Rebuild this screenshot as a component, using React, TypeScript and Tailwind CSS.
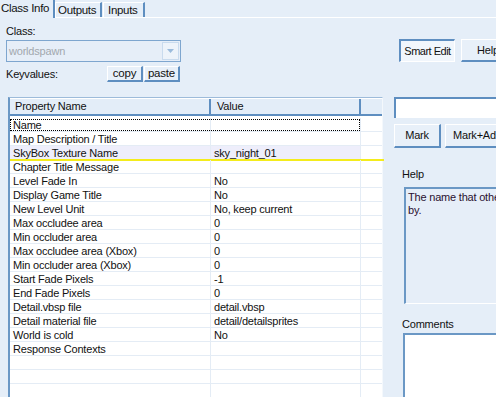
import React from "react";

const rows: [string, string][] = [
  ["Name", ""],
  ["Map Description / Title", ""],
  ["SkyBox Texture Name", "sky_night_01"],
  ["Chapter Title Message", ""],
  ["Level Fade In", "No"],
  ["Display Game Title", "No"],
  ["New Level Unit", "No, keep current"],
  ["Max occludee area", "0"],
  ["Min occluder area", "0"],
  ["Max occludee area (Xbox)", "0"],
  ["Min occluder area (Xbox)", "0"],
  ["Start Fade Pixels", "-1"],
  ["End Fade Pixels", "0"],
  ["Detail.vbsp file", "detail.vbsp"],
  ["Detail material file", "detail/detailsprites"],
  ["World is cold", "No"],
  ["Response Contexts", ""],
  ["", ""],
  ["", ""],
  ["", ""],
];

function Btn({ children, className = "" }: { children: React.ReactNode; className?: string }) {
  return (
    <div
      className={
        "flex items-center justify-center shrink-0 bg-[#e8f0f9] border-t border-l border-t-white border-l-white border-b-2 border-r-2 border-b-[#5e8ec0] border-r-[#5e8ec0] " +
        className
      }
    >
      {children}
    </div>
  );
}

export default function App() {
  return (
    <div className="w-[496px] h-[397px] overflow-hidden bg-[#e5eef8] text-[11px] tracking-[-0.2px] text-[#111] font-['Liberation_Sans',Arial,sans-serif] flex flex-col">
      {/* Tabs */}
      <div className="flex h-[18px] shrink-0">
        <div className="w-[55px] h-[18px] border-r-2 border-[#5e8ec0] pl-[1px] leading-[16px] tracking-[-0.3px] text-[11.5px] shrink-0">
          Class Info
        </div>
        <div className="flex-1 flex items-end border-b border-white">
          <div className="h-[15px] w-[47px] border-l border-t border-white border-r-2 border-r-[#5e8ec0] pl-[2px] leading-[14px] text-[11.5px] tracking-[-0.3px]">
            Outputs
          </div>
          <div className="h-[15px] w-[42px] ml-[1px] border-l border-t border-white border-r-2 border-r-[#5e8ec0] pl-[4px] leading-[14px] text-[11.5px] tracking-[-0.3px]">
            Inputs
          </div>
        </div>
      </div>

      {/* Top section */}
      <div className="flex h-[79px] shrink-0">
        <div className="w-[181px] shrink-0 pl-[6px] pt-[6px] flex flex-col">
          <div className="h-[14px] leading-[14px]">Class:</div>
          <div className="mt-[2px] h-[22px] border border-[#7ea6cf] bg-[#e6eef8] flex items-center justify-between pl-[2px] pr-[1px]">
            <span className="text-[#a2a8ae]">worldspawn</span>
            <div className="w-[17px] h-[18px] bg-[#edf3fa] border border-[#c9dbee] flex items-center justify-center">
              <svg width="7" height="4" viewBox="0 0 7 4">
                <path d="M0 0 H7 L3.5 4 Z" fill="#9bbbdc" />
              </svg>
            </div>
          </div>
          <div className="mt-[4px] flex items-center h-[16px]">
            <div className="w-[101px] shrink-0">Keyvalues:</div>
            <Btn className="w-[36px] h-[16px] text-[11.5px]">copy</Btn>
            <Btn className="w-[36px] h-[16px] ml-[1px] text-[11.5px]">paste</Btn>
          </div>
        </div>
        <div className="flex pt-[21px] ml-[218px] shrink-0">
          <div className="w-[56px] h-[23px] shrink-0 border-t-2 border-l-2 border-[#5e8ec0] border-b border-r border-b-white border-r-white bg-[#f1f6fc] flex items-center justify-center tracking-[-0.5px]">
            Smart Edit
          </div>
          <Btn className="w-[60px] h-[23px] ml-[6px] justify-start pl-[15px]">Help</Btn>
        </div>
      </div>

      {/* Bottom section */}
      <div className="flex flex-1 min-h-0">
        {/* List */}
        <div className="ml-[8px] w-[375px] shrink-0 h-[320px] border-l-2 border-t border-r border-l-[#6b98c5] border-t-[#9dbbda] border-r-[#f4f8fc] bg-white flex flex-col">
          <div className="h-[18px] flex bg-[#e3edf8] border-b-2 border-[#5e8ec0] border-t border-t-white shrink-0">
            <div className="w-[201px] border-r-2 border-[#5e8ec0] pl-[5px] leading-[15px]">Property Name</div>
            <div className="w-[150px] border-r-2 border-[#5e8ec0] pl-[6px] leading-[15px]">Value</div>
            <div className="flex-1"></div>
          </div>
          <div className="pt-[2px]">
            {rows.map(([k, v], i) => (
              <div key={i} className="relative flex h-[14px] border-b border-[#e4ecf5]">
                <div
                  className={
                    "w-[201px] border-r border-[#e4ecf5] pl-[3px] leading-[14px] whitespace-nowrap " +
                    (i === 2 ? "bg-[#eeeefb]" : "")
                  }
                >
                  {k}
                </div>
                <div
                  className={
                    "w-[150px] border-r border-[#e4ecf5] pl-[3px] leading-[14px] whitespace-nowrap " +
                    (i === 2 ? "bg-[#eeeefb]" : "")
                  }
                >
                  {v}
                </div>
                <div className="flex-1"></div>
                {i === 0 && (
                  <div className="absolute left-0 top-[1px] w-[350px] h-[12px] border border-dotted border-black"></div>
                )}
                {i === 2 && (
                  <div className="absolute left-0 right-[-2px] bottom-[-2px] h-[2px] bg-[#f4ec1c]"></div>
                )}
              </div>
            ))}
          </div>
        </div>

        {/* Right panel */}
        <div className="ml-[11px] w-[102px] shrink-0 flex flex-col">
          <div className="h-[21px] w-[140px] border-t-2 border-l-2 border-[#5e8ec0] bg-white shrink-0"></div>
          <div className="flex mt-[6px] shrink-0">
            <Btn className="w-[47px] h-[24px]">Mark</Btn>
            <Btn className="w-[80px] h-[24px] ml-[4px] justify-start pl-[7px]">Mark+Add</Btn>
          </div>
          <div className="ml-[8px] mt-[19px] h-[14px] leading-[14px] shrink-0">Help</div>
          <div className="ml-[10px] mt-[6px] h-[117px] w-[300px] border-t-2 border-l-2 border-[#6b98c5] border-b border-b-white bg-[#e6eef8] pl-[2px] pt-[2px] leading-[13px] text-[#2a1030] shrink-0">
            <div className="whitespace-nowrap">The name that other entities refer to this entity</div>
            <div>by.</div>
          </div>
          <div className="ml-[8px] mt-[13px] h-[14px] leading-[14px] shrink-0">Comments</div>
          <div className="ml-[9px] mt-[2px] h-[80px] w-[300px] border-t-2 border-l-2 border-[#6b98c5] bg-white shrink-0"></div>
        </div>
      </div>
    </div>
  );
}
